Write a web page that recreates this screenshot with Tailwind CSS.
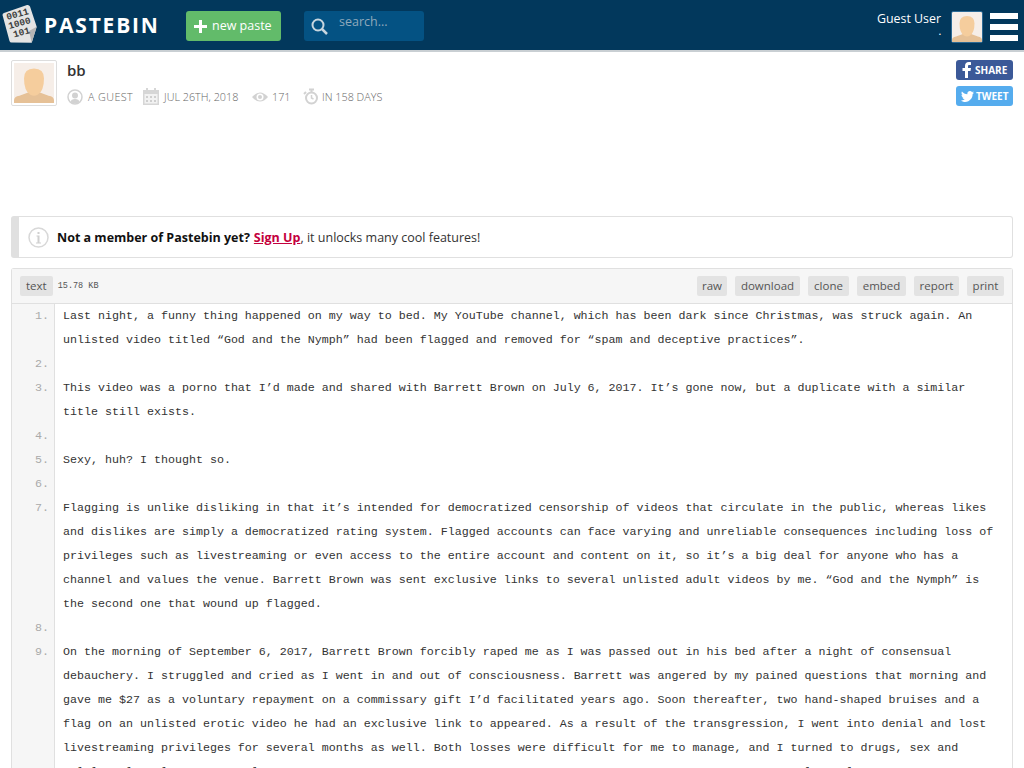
<!DOCTYPE html>
<html lang="en">
<head>
    <meta charset="UTF-8">
    <meta name="viewport" content="width=device-width, initial-scale=1.0">
    <title>bb - Pastebin</title>
    <script src="https://cdn.jsdelivr.net/npm/@tailwindcss/browser@4"></script>
</head>
<body class="bg-white h-[768px] overflow-hidden font-['Open_Sans','Noto_Sans',sans-serif] text-[#333]">
    <!-- top bar -->
    <header class="h-[52px] bg-[#02385c] border-b-2 border-[#c9cfd3] flex items-start">
        <svg class="ml-[2px] mt-[4px] w-[36px] h-[40px] shrink-0 overflow-visible" viewBox="0 0 36 40">
            <path d="M2 9 L25 1 Q27 .5 28 2.500 L34.700 22.700 L29.700 38.700 L9.500 38.500 Q8 38.500 7.500 37 L.5 11 Q.5 9.500 2 9Z" fill="#e4e4e4"/>
            <path d="M34.700 22.700 L29.700 38.700 L27 27 Z" fill="#b5b5b5"/>
            <g font-family="Liberation Mono" font-weight="700" font-size="9.500" fill="#3d3d3d">
                <text x="5.300" y="16" transform="rotate(-15 5.300 16)">0011</text>
                <text x="7.300" y="25" transform="rotate(-15 7.300 25)">1000</text>
                <text x="12" y="33.500" transform="rotate(-15 12 33.500)">101</text>
            </g>
        </svg>
        <div class="ml-[6px] mt-[10px] w-[142px] shrink-0 text-white text-[21px] leading-[30px] font-bold tracking-[1.800px]">PASTEBIN</div>
        <a class="mt-[11px] w-[95px] h-[30px] rounded-[3px] bg-[#62bb6a] text-white text-[12.500px] flex items-center pl-[8px]">
            <svg class="w-[13px] h-[13px] mr-[5px]" viewBox="0 0 13 13"><path d="M5 0h3v5h5v3H8v5H5V8H0V5h5z" fill="#fff"/></svg>
            new paste
        </a>
        <div class="ml-[23px] mt-[11px] w-[120px] h-[30px] rounded-[3px] bg-[#045283] flex items-start relative">
            <svg class="ml-[7px] mt-[7px] w-[17px] h-[17px]" viewBox="0 0 17 17" fill="none" stroke="#c8d6df" stroke-width="2"><circle cx="7" cy="7" r="5.500"/><path d="M11 11l5 5" stroke-width="2.500"/></svg>
            <span class="ml-[11px] mt-[2px] text-[12.500px] leading-[18px] text-[#8fa9bb]">search...</span>
        </div>
        <div class="ml-auto mt-[11px] mr-[10px] text-white text-[12.400px] leading-[16px] text-right">
            <div>Guest User</div>
            <div class="text-[8px] leading-[10px] font-bold">.</div>
        </div>
        <svg class="mt-[11px] w-[32px] h-[32px] rounded-[2px] border border-[#2c6a95]" viewBox="0 0 44 44">
            <use href="#face"/>
        </svg>
        <div class="ml-[7px] mr-[6px] mt-[13px] w-[28px] flex flex-col gap-[5px]">
            <span class="h-[6px] bg-white"></span>
            <span class="h-[6px] bg-white"></span>
            <span class="h-[6px] bg-white"></span>
        </div>
    </header>

    <main class="px-[11px]">
        <!-- paste info -->
        <section class="pt-[8px] h-[164px] flex items-start">
            <div class="w-[46px] h-[46px] border border-[#ddd] rounded-[2px] p-[2px] shrink-0">
                <svg class="w-full h-full" viewBox="0 0 44 44">
                    <defs>
                        <g id="face">
                            <rect width="44" height="44" fill="#f6eee8"/>
                            <path d="M0 41 Q0 37 6 36 L17 32 L27 32 L38 36 Q44 37 44 41 V44 H0Z" fill="#e6c197"/>
                            <path d="M22 6 Q33 6 33 17 Q33 31 26 35 Q22 37 18 35 Q11 31 11 17 Q11 6 22 6Z" fill="#f5cd9d"/>
                        </g>
                    </defs>
                    <use href="#face"/>
                </svg>
            </div>
            <div class="ml-[10px] flex-1">
                <h1 class="text-[15px] leading-[20px] font-semibold text-[#333]">bb</h1>
                <div class="mt-[8px] flex items-center whitespace-nowrap text-[10.800px] leading-[16px] text-[#666] font-light uppercase">
                    <svg class="w-[16px] h-[16px]" viewBox="0 0 16 16"><circle cx="8" cy="8" r="7" fill="none" stroke="#d2d2d2" stroke-width="1.500"/><circle cx="8" cy="6.500" r="3" fill="#d2d2d2"/><path d="M3.500 13 Q4 10 8 10 Q12 10 12.500 13 Q8 16 3.500 13Z" fill="#d2d2d2"/></svg>
                    <span class="ml-[5px] w-[45px] tracking-[0.400px]">a guest</span>
                    <svg class="ml-[10px] w-[16px] h-[17px]" viewBox="0 0 16 17"><path d="M0 2h16v15H0z" fill="#d6d6d6"/><path d="M1.500 6h13v9.500h-13z" fill="#f2f2f2"/><path d="M3 0h2v3H3zM11 0h2v3h-2z" fill="#d6d6d6"/><path d="M3 8h2v2H3zM7 8h2v2H7zM11 8h2v2h-2zM3 12h2v2H3zM7 12h2v2H7zM11 12h2v2h-2z" fill="#cfcfcf"/></svg>
                    <span class="ml-[5px] w-[75px]">jul 26th, 2018</span>
                    <svg class="ml-[13px] w-[16px] h-[12px]" viewBox="0 0 16 12"><path d="M0 6 Q8 -3 16 6 Q8 15 0 6Z" fill="#d2d2d2"/><circle cx="8" cy="6" r="3.500" fill="#fff"/><circle cx="8" cy="6" r="2" fill="#d2d2d2"/></svg>
                    <span class="ml-[4px] w-[18px]">171</span>
                    <svg class="ml-[13px] w-[16px] h-[17px]" viewBox="0 0 16 17" fill="none" stroke="#d2d2d2"><circle cx="8.500" cy="10" r="5.500" stroke-width="2"/><path d="M6 1.500h5M8.500 1.500v3" stroke-width="2"/><path d="M8.500 7v3l2 1" stroke-width="1.500"/><path d="M1 6l2-2" stroke-width="2"/></svg>
                    <span class="ml-[3px]">in 158 days</span>
                </div>
            </div>
            <div class="w-[57px] flex flex-col gap-[6px] shrink-0">
                <a class="h-[20px] rounded-[3px] bg-[#3b5998] text-white text-[10px] font-bold flex items-center pl-[6px]">
                    <svg class="w-[9px] h-[16px] mr-[4px]" viewBox="0 0 9 16"><path d="M6 16V9h2.500L9 6H6V4.300C6 3.400 6.300 3 7.300 3H9V.2C8.600.1 7.700 0 6.800 0 4.500 0 3 1.400 3 3.900V6H.5v3H3v7z" fill="#fff"/></svg>
                    SHARE
                </a>
                <a class="h-[20px] rounded-[3px] bg-[#55acee] text-white text-[10px] font-bold flex items-center pl-[5px]">
                    <svg class="w-[13px] h-[11px] mr-[2px]" viewBox="0 0 24 20"><path d="M24 2.400c-.9.400-1.800.700-2.800.800 1-.6 1.800-1.600 2.200-2.700-1 .6-2 1-3.100 1.200C19.300.6 18 0 16.600 0c-2.700 0-4.900 2.200-4.900 4.900 0 .4 0 .8.100 1.100C7.700 5.800 4.100 3.900 1.700.9 1.200 1.600 1 2.500 1 3.400c0 1.700.9 3.200 2.200 4.100-.8 0-1.600-.2-2.200-.6v.1c0 2.400 1.700 4.400 3.900 4.800-.4.100-.8.200-1.300.2-.3 0-.6 0-.9-.1.600 2 2.400 3.400 4.600 3.400-1.700 1.300-3.800 2.100-6.100 2.100-.4 0-.8 0-1.200-.1C2.200 19.200 4.800 20 7.500 20c9.100 0 14-7.500 14-14v-.6c1-.7 1.800-1.600 2.500-3z" fill="#fff"/></svg>
                    TWEET
                </a>
            </div>
        </section>

        <!-- notice -->
        <div class="h-[42px] border border-[#e0e0e0] border-l-[8px] border-l-[#e0e0e0] rounded-[3px] flex items-center text-[12.500px] leading-[20px] pt-[1px]">
            <svg class="ml-[9px] w-[21px] h-[21px]" viewBox="0 0 21 21"><circle cx="10.500" cy="10.500" r="9.500" fill="none" stroke="#d8d8d8" stroke-width="1.500"/><rect x="9.500" y="5" width="2" height="2" fill="#d0d0d0"/><path d="M8.500 8.500h3v7h1.500v1H8v-1h1.500v-6h-1z" fill="#d0d0d0"/></svg>
            <span class="ml-[8px] font-bold text-[#111]">Not a member of Pastebin yet?</span>
            <a class="ml-[4px] font-bold text-[#c4003d] underline">Sign Up</a>
            <span class="text-[#333]">, it unlocks many cool features!</span>
        </div>

        <!-- code frame -->
        <section class="mt-[10px] border border-b-0 border-[#e0e0e0] rounded-t-[3px]">
            <div class="h-[35px] bg-[#f6f6f6] border-b border-[#e0e0e0] flex items-center px-[8px] text-[11.500px] text-[#555]">
                <span class="h-[20px] px-[6px] leading-[19px] bg-[#e3e3e3] rounded-[2px]">text</span>
                <span class="ml-[5px] text-[8.500px] text-[#555] font-['Liberation_Mono',monospace]">15.78 KB</span>
                <div class="ml-auto flex gap-[8px]">
                    <a class="w-[30px] h-[20px] text-center leading-[19px] bg-[#e3e3e3] rounded-[2px]">raw</a>
                    <a class="w-[65px] h-[20px] text-center leading-[19px] bg-[#e3e3e3] rounded-[2px]">download</a>
                    <a class="w-[41px] h-[20px] text-center leading-[19px] bg-[#e3e3e3] rounded-[2px]">clone</a>
                    <a class="w-[49px] h-[20px] text-center leading-[19px] bg-[#e3e3e3] rounded-[2px]">embed</a>
                    <a class="w-[45px] h-[20px] text-center leading-[19px] bg-[#e3e3e3] rounded-[2px]">report</a>
                    <a class="w-[37px] h-[20px] text-center leading-[19px] bg-[#e3e3e3] rounded-[2px]">print</a>
                </div>
            </div>
            <div class="grid grid-cols-[43px_1fr] font-['Liberation_Mono',monospace] text-[11.670px] leading-[24px] text-[#333]">
                <div class="contents">
                    <div class="bg-[#f6f6f6] border-r border-[#e0e0e0] text-right pr-[5px] text-[#aaa]">1.</div>
                    <div class="pl-[8px] pr-[6px]">Last night, a funny thing happened on my way to bed. My YouTube channel, which has been dark since Christmas, was struck again. An<br>unlisted video titled “God and the Nymph” had been flagged and removed for “spam and deceptive practices”.</div>
                </div>
                <div class="contents">
                    <div class="bg-[#f6f6f6] border-r border-[#e0e0e0] text-right pr-[5px] text-[#aaa]">2.</div>
                    <div class="pl-[8px] pr-[6px] h-[24px]"></div>
                </div>
                <div class="contents">
                    <div class="bg-[#f6f6f6] border-r border-[#e0e0e0] text-right pr-[5px] text-[#aaa]">3.</div>
                    <div class="pl-[8px] pr-[6px]">This video was a porno that I’d made and shared with Barrett Brown on July 6, 2017. It’s gone now, but a duplicate with a similar<br>title still exists.</div>
                </div>
                <div class="contents">
                    <div class="bg-[#f6f6f6] border-r border-[#e0e0e0] text-right pr-[5px] text-[#aaa]">4.</div>
                    <div class="pl-[8px] pr-[6px] h-[24px]"></div>
                </div>
                <div class="contents">
                    <div class="bg-[#f6f6f6] border-r border-[#e0e0e0] text-right pr-[5px] text-[#aaa]">5.</div>
                    <div class="pl-[8px] pr-[6px]">Sexy, huh? I thought so.</div>
                </div>
                <div class="contents">
                    <div class="bg-[#f6f6f6] border-r border-[#e0e0e0] text-right pr-[5px] text-[#aaa]">6.</div>
                    <div class="pl-[8px] pr-[6px] h-[24px]"></div>
                </div>
                <div class="contents">
                    <div class="bg-[#f6f6f6] border-r border-[#e0e0e0] text-right pr-[5px] text-[#aaa]">7.</div>
                    <div class="pl-[8px] pr-[6px]">Flagging is unlike disliking in that it’s intended for democratized censorship of videos that circulate in the public, whereas likes<br>and dislikes are simply a democratized rating system. Flagged accounts can face varying and unreliable consequences including loss of<br>privileges such as livestreaming or even access to the entire account and content on it, so it’s a big deal for anyone who has a<br>channel and values the venue. Barrett Brown was sent exclusive links to several unlisted adult videos by me. “God and the Nymph” is<br>the second one that wound up flagged.</div>
                </div>
                <div class="contents">
                    <div class="bg-[#f6f6f6] border-r border-[#e0e0e0] text-right pr-[5px] text-[#aaa]">8.</div>
                    <div class="pl-[8px] pr-[6px] h-[24px]"></div>
                </div>
                <div class="contents">
                    <div class="bg-[#f6f6f6] border-r border-[#e0e0e0] text-right pr-[5px] text-[#aaa]">9.</div>
                    <div class="pl-[8px] pr-[6px] whitespace-pre">On the morning of September 6, 2017, Barrett Brown forcibly raped me as I was passed out in his bed after a night of consensual<br>debauchery. I struggled and cried as I went in and out of consciousness. Barrett was angered by my pained questions that morning and<br>gave me $27 as a voluntary repayment on a commissary gift I’d facilitated years ago. Soon thereafter, two hand-shaped bruises and a<br>flag on an unlisted erotic video he had an exclusive link to appeared. As a result of the transgression, I went into denial and lost<br>livestreaming privileges for several months as well. Both losses were difficult for me to manage, and I turned to drugs, sex and<br>  l l    l    l            l                                                                              l     l</div>
                </div>
            </div>
        </section>
    </main>
</body>
</html>
